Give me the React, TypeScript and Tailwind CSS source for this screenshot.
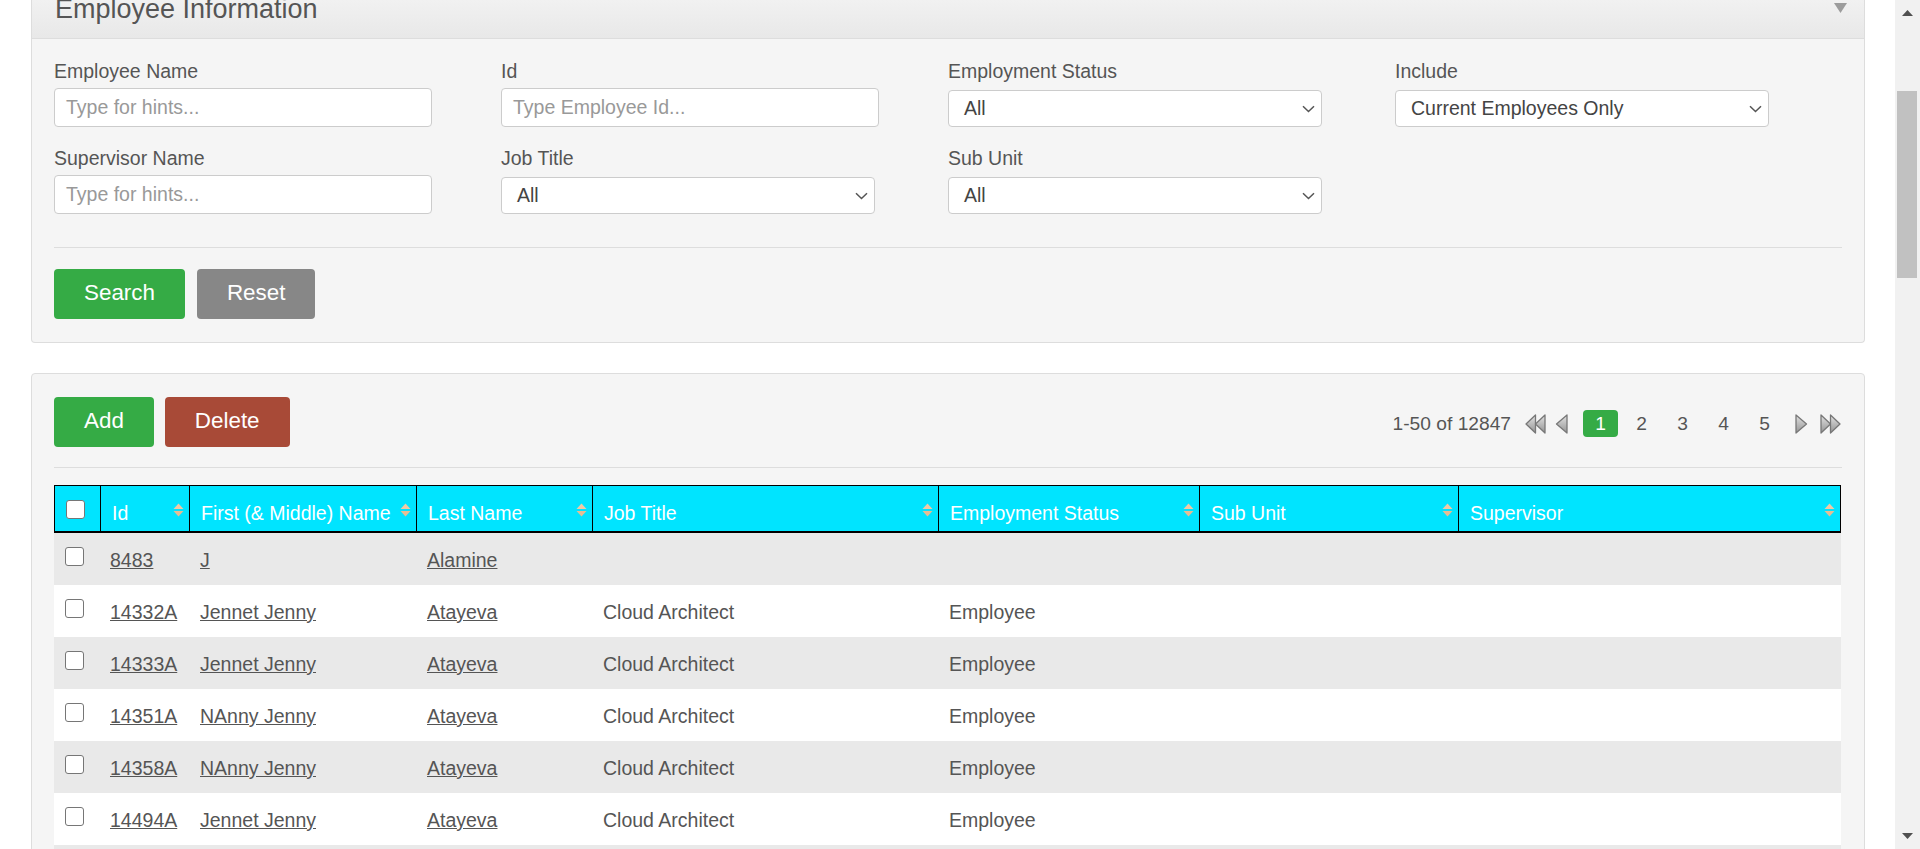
import React from "react";

const FONT = "font-['Liberation_Sans',Arial,sans-serif]";

function Chevron() {
  return (
    <svg width="13" height="8" viewBox="0 0 13 8" fill="none">
      <path d="M1 1.2 L6.5 6.5 L12 1.2" stroke="#555" strokeWidth="1.5" />
    </svg>
  );
}

function TextInput({ placeholder }: { placeholder: string }) {
  return (
    <div className="flex h-[39px] w-[378px] items-center rounded-[4px] border border-[#cccccc] bg-white pl-[11px] text-[19.5px] text-[#999999]">
      {placeholder}
    </div>
  );
}

function SelectBox({ value }: { value: string }) {
  return (
    <div className="mt-[2px] flex h-[37px] w-[374px] items-center justify-between rounded-[4px] border border-[#cccccc] bg-white pl-[15px] pr-[6px] text-[19.5px] text-[#444444]">
      <span>{value}</span>
      <Chevron />
    </div>
  );
}

function Field({ label, children }: { label: string; children: React.ReactNode }) {
  return (
    <div className="flex flex-col">
      <div className="mb-[3px] text-[19.5px] leading-[27px] text-[#555555]">{label}</div>
      {children}
    </div>
  );
}

function Btn({ label, color }: { label: string; color: string }) {
  return (
    <div
      className={`flex h-[50px] items-center justify-center rounded-[4px] px-[30px] pb-[2px] text-[22.4px] text-white ${color}`}
    >
      {label}
    </div>
  );
}

function SortIcon() {
  return (
    <svg width="11" height="14" viewBox="0 0 11 14" className="mt-[3px] shrink-0">
      <polygon points="5.5,0.5 10.5,6 0.5,6" fill="#efcaa6" />
      <polygon points="0.5,8 10.5,8 5.5,13.5" fill="#e6bd94" />
    </svg>
  );
}

function CheckBox() {
  return <div className="h-[19px] w-[19px] rounded-[3px] border border-[#767676] bg-white" />;
}

function Arrow({ kind }: { kind: "first" | "prev" | "next" | "last" }) {
  const id = `g-${kind}`;
  const defs = (
    <defs>
      <linearGradient id={id} x1="0" y1="0" x2="0" y2="1">
        <stop offset="0" stopColor="#e2e2e2" />
        <stop offset="1" stopColor="#949494" />
      </linearGradient>
    </defs>
  );
  const common = { fill: `url(#${id})`, stroke: "#777777", strokeWidth: 1.3, strokeLinejoin: "round" as const };
  if (kind === "first")
    return (
      <svg width="21" height="20" viewBox="0 0 21 20">
        {defs}
        <polygon points="10.5,1 10.5,19 1,10" {...common} />
        <polygon points="20,1 20,19 10.5,10" {...common} />
      </svg>
    );
  if (kind === "prev")
    return (
      <svg width="13" height="20" viewBox="0 0 13 20">
        {defs}
        <polygon points="12,1 12,19 1.5,10" {...common} />
      </svg>
    );
  if (kind === "next")
    return (
      <svg width="13" height="20" viewBox="0 0 13 20">
        {defs}
        <polygon points="1,1 1,19 11.5,10" {...common} />
      </svg>
    );
  return (
    <svg width="21" height="20" viewBox="0 0 21 20">
      {defs}
      <polygon points="1,1 1,19 10.5,10" {...common} />
      <polygon points="10.5,1 10.5,19 20,10" {...common} />
    </svg>
  );
}

const COLS = "grid grid-cols-[46px_89px_227px_176px_346px_261px_259px_383px]";

const headers = [
  "Id",
  "First (& Middle) Name",
  "Last Name",
  "Job Title",
  "Employment Status",
  "Sub Unit",
  "Supervisor",
];

const rows = [
  ["8483", "J", "Alamine", "", ""],
  ["14332A", "Jennet Jenny", "Atayeva", "Cloud Architect", "Employee"],
  ["14333A", "Jennet Jenny", "Atayeva", "Cloud Architect", "Employee"],
  ["14351A", "NAnny Jenny", "Atayeva", "Cloud Architect", "Employee"],
  ["14358A", "NAnny Jenny", "Atayeva", "Cloud Architect", "Employee"],
  ["14494A", "Jennet Jenny", "Atayeva", "Cloud Architect", "Employee"],
];

function Scrollbar() {
  return (
    <div className="flex h-[849px] w-[25px] shrink-0 flex-col bg-[#f1f1f1]">
      <svg width="11" height="6" viewBox="0 0 11 6" className="ml-[7px] mt-[10px]">
        <polygon points="5.5,0 11,6 0,6" fill="#505050" />
      </svg>
      <div className="ml-[2px] mt-[75px] h-[187px] w-[20px] bg-[#c1c1c1]" />
      <svg width="11" height="6" viewBox="0 0 11 6" className="mb-[10px] ml-[7px] mt-auto">
        <polygon points="0,0 11,0 5.5,6" fill="#505050" />
      </svg>
    </div>
  );
}

export default function App() {
  return (
    <div className={`flex h-[849px] w-[1920px] overflow-hidden bg-white ${FONT}`}>
      <div className="h-[849px] w-[1895px] shrink-0 overflow-hidden">
        {/* Search panel */}
        <div className="ml-[31px] w-[1834px] rounded-b-[4px] border border-t-0 border-[#dddddd] bg-[#f5f5f5]">
          <div className="flex h-[39px] items-start justify-between overflow-hidden border-b border-[#dddddd] bg-gradient-to-b from-[#f1f1f1] to-[#e8e8e8] pl-[23px] pr-[17px]">
            <div className="-mt-[5px] text-[27px] leading-[29px] text-[#555555]">Employee Information</div>
            <svg width="13" height="10" viewBox="0 0 13 10" className="mt-[3px]">
              <polygon points="0,0 13,0 6.5,10" fill="#9c9c9c" />
            </svg>
          </div>
          <div className="px-[22px] pb-[23px] pt-[19px]">
            <div className="grid grid-cols-[447px_447px_447px_447px] gap-y-[18px]">
              <Field label="Employee Name">
                <TextInput placeholder="Type for hints..." />
              </Field>
              <Field label="Id">
                <TextInput placeholder="Type Employee Id..." />
              </Field>
              <Field label="Employment Status">
                <SelectBox value="All" />
              </Field>
              <Field label="Include">
                <SelectBox value="Current Employees Only" />
              </Field>
              <Field label="Supervisor Name">
                <TextInput placeholder="Type for hints..." />
              </Field>
              <Field label="Job Title">
                <SelectBox value="All" />
              </Field>
              <Field label="Sub Unit">
                <SelectBox value="All" />
              </Field>
              <div />
            </div>
            <div className="mt-[33px] border-t border-[#dddddd]" />
            <div className="mt-[21px] flex gap-[12px]">
              <Btn label="Search" color="bg-[#35ab45]" />
              <Btn label="Reset" color="bg-[#878787]" />
            </div>
          </div>
        </div>

        {/* Results panel */}
        <div className="ml-[31px] mt-[30px] w-[1834px] rounded-[4px] border border-[#dddddd] bg-[#f5f5f5] px-[22px] pt-[23px]">
          <div className="flex items-center justify-between">
            <div className="flex gap-[11px]">
              <Btn label="Add" color="bg-[#35ab45]" />
              <Btn label="Delete" color="bg-[#a84a37]" />
            </div>
            <div className="mr-[1px] mt-[4px] flex items-center text-[19.2px] text-[#555555]">
              <span>1-50 of 12847</span>
              <div className="ml-[14px]">
                <Arrow kind="first" />
              </div>
              <div className="ml-[9px]">
                <Arrow kind="prev" />
              </div>
              <div className="ml-[15px] flex gap-[6px]">
                {["1", "2", "3", "4", "5"].map((p) => (
                  <div
                    key={p}
                    className={
                      p === "1"
                        ? "flex h-[27px] w-[35px] items-center justify-center rounded-[4px] bg-[#35ab45] text-white"
                        : "flex h-[27px] w-[35px] items-center justify-center"
                    }
                  >
                    {p}
                  </div>
                ))}
              </div>
              <div className="ml-[13px]">
                <Arrow kind="next" />
              </div>
              <div className="ml-[12px]">
                <Arrow kind="last" />
              </div>
            </div>
          </div>
          <div className="mt-[20px] border-t border-[#dddddd]" />
          <div className="mt-[17px] w-[1787px]">
            <div className={`${COLS} h-[48px] border-b-2 border-t border-black bg-[#00e4ff] text-[19.5px] leading-[27px] text-white`}>
              <div className="border-l border-black pl-[11px] pt-[14px]">
                <CheckBox />
              </div>
              {headers.map((h, i) => (
                <div
                  key={h}
                  className={`flex items-start justify-between border-l border-black pl-[11px] pr-[5px] pt-[14px] ${
                    i === headers.length - 1 ? "border-r" : ""
                  }`}
                >
                  <span className="whitespace-nowrap">{h}</span>
                  <SortIcon />
                </div>
              ))}
            </div>
            {rows.map((r, idx) => (
              <div
                key={r[0]}
                className={`${COLS} h-[52px] text-[19.5px] leading-[27px] text-[#555555] ${
                  idx % 2 === 0 ? "bg-[#e9e9e9]" : "bg-white"
                }`}
              >
                <div className="pl-[11px] pt-[14px]">
                  <CheckBox />
                </div>
                <div className="pl-[10px] pt-[14px]">
                  <span className="underline">{r[0]}</span>
                </div>
                <div className="pl-[11px] pt-[14px]">
                  <span className="whitespace-nowrap underline">{r[1]}</span>
                </div>
                <div className="pl-[11px] pt-[14px]">
                  <span className="underline">{r[2]}</span>
                </div>
                <div className="pl-[11px] pt-[14px]">{r[3]}</div>
                <div className="pl-[11px] pt-[14px]">{r[4]}</div>
                <div />
                <div />
              </div>
            ))}
            <div className="h-[52px] bg-[#e9e9e9]" />
          </div>
        </div>
      </div>
      <Scrollbar />
    </div>
  );
}
